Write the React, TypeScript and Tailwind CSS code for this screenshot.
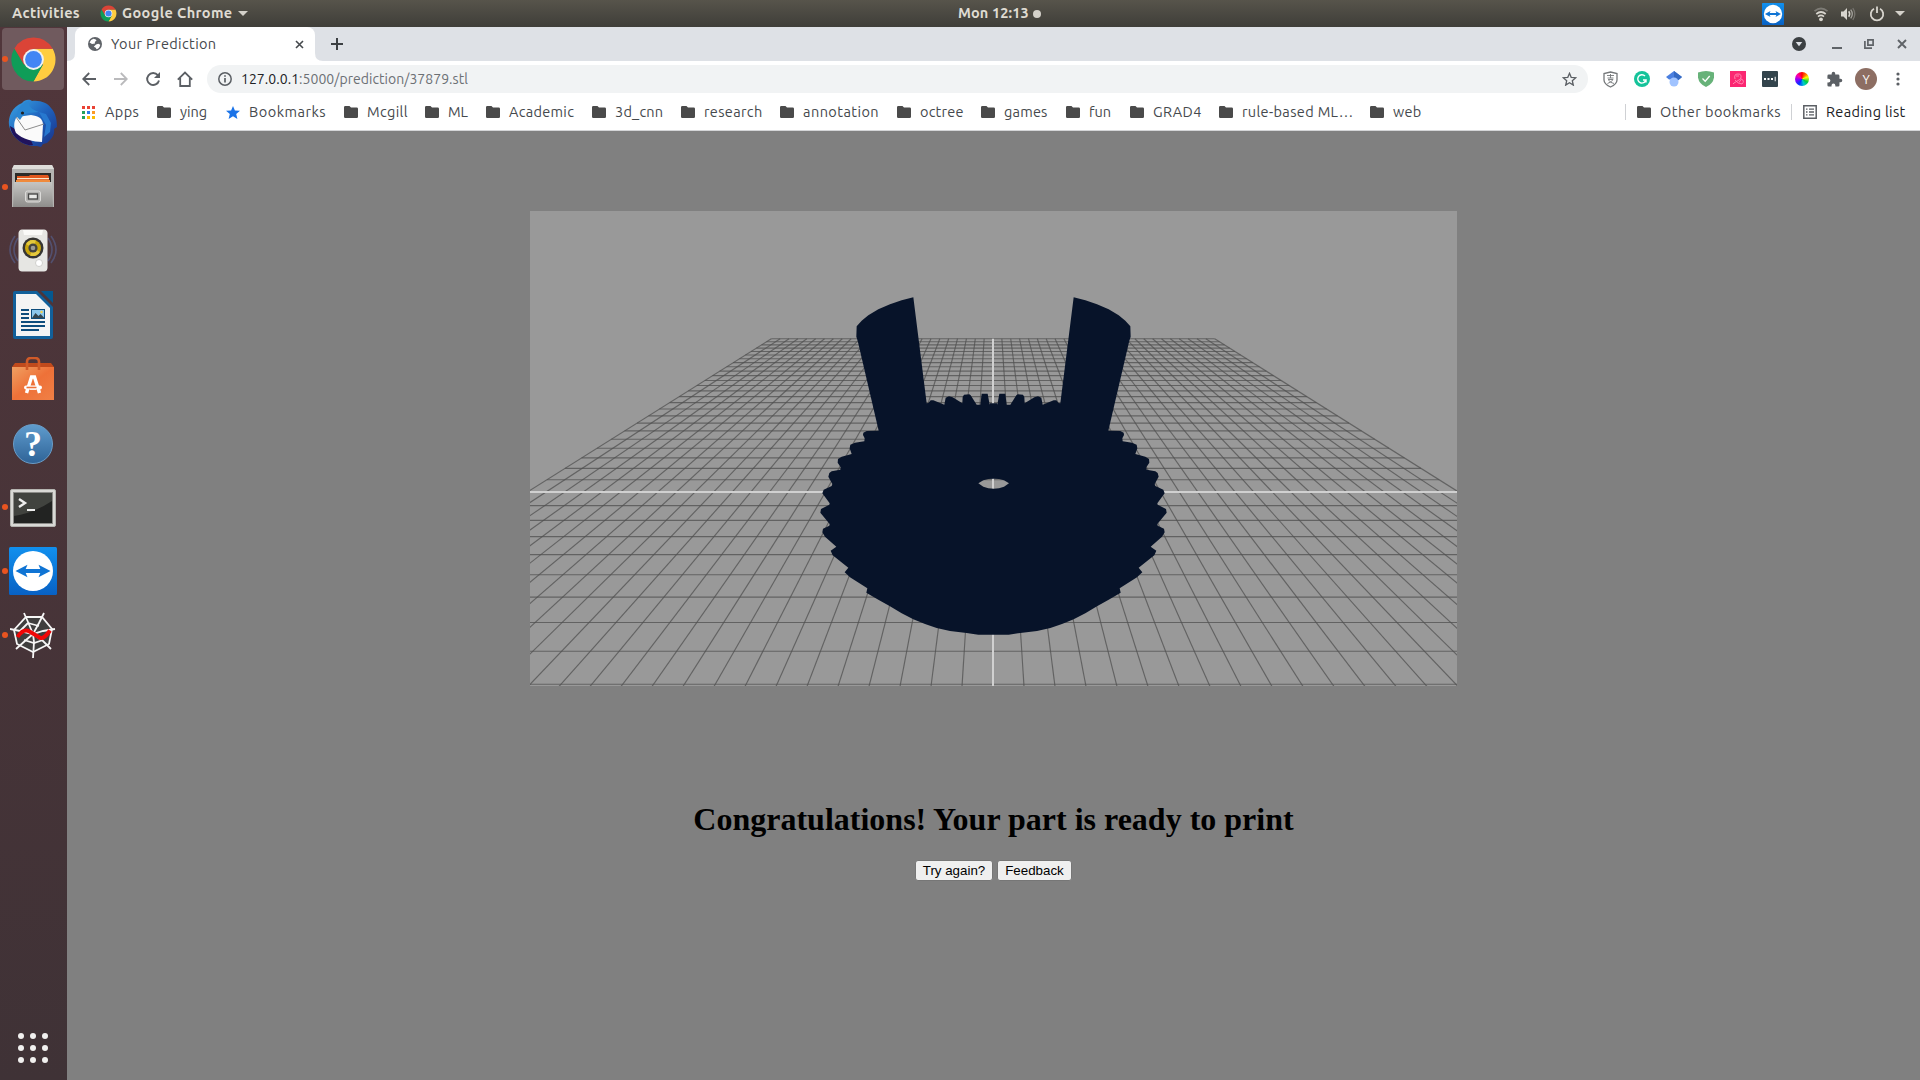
import React from "react";

const UI = "font-['Ubuntu','Noto_Sans',sans-serif]";

/* ---------- 3D viewer ---------- */

const CX = 463.5;
const DEPTH = 22.71;
const HORIZON = -11.6;
const ROWS = 292.7;
const HALF = 25;

const rowY = (k: number) => HORIZON + (ROWS * DEPTH) / (DEPTH - k);
const colX = (i: number, k: number) => CX - 0.5 + (i * 18.63 * DEPTH) / (DEPTH - k);

// Left half of the model outline, in thirds of a pixel, measured from (270, 69) of the canvas.
const OUTLINE: [number, number][] = [
  [580.5, 370], [570, 370], [569, 374], [563, 341], [545, 341], [541, 374], [530, 374], [512, 346], [508, 343],
  [492, 344], [488, 351], [487, 370], [458, 352], [447, 349], [437, 353], [433, 374], [400, 361], [392, 361],
  [385, 369], [380, 370], [340, 52], [305, 61], [270, 73], [235, 88], [205, 106], [185, 122], [170, 139],
  [169, 170], [173, 182], [236, 452], [200, 453], [190, 458], [189, 465], [194, 475], [193, 484], [165, 488],
  [151, 494], [149, 505], [155, 522], [125, 530], [114, 537], [113, 548], [122, 562], [121, 569], [95, 574],
  [88, 579], [85, 590], [97, 612], [95, 618], [71, 629], [67, 640], [89, 670], [88, 674], [63, 687], [61, 698],
  [89, 732], [88, 737], [69, 746], [67, 757], [75, 770], [109, 800], [92, 812], [98, 826], [145, 863],
  [134, 877], [150, 892], [202, 925], [199, 938], [235, 959], [270, 979], [305, 1000], [340, 1018], [375, 1032],
  [410, 1044], [450, 1053], [500, 1059], [535, 1064], [580.5, 1064],
];
const MIRRORED = [...OUTLINE, ...[...OUTLINE].reverse().map(([x, y]): [number, number] => [1161 - x, y])];
const toPath = (pts: [number, number][]) =>
  "M" + pts.map(([x, y]) => `${(270 + x / 3).toFixed(2)} ${(69 + y / 3).toFixed(2)}`).join("L") + "Z";
const HOLE: [number, number][] = [
  [535, 610], [550, 601], [565, 597], [581, 596], [597, 597], [612, 601], [627, 610], [612, 620], [597, 625],
  [581, 626], [565, 625], [550, 620],
];

function Viewer() {
  const cols = Array.from({ length: 2 * HALF + 1 }, (_, i) => i - HALF);
  const rows = Array.from({ length: 35 }, (_, i) => i - HALF);
  return (
    <svg width="927" height="475" viewBox="0 0 927 475" className="block bg-[#999999]">
      <g stroke="#505050" strokeWidth="1.150" strokeOpacity="0.750">
        {cols.filter((i) => i !== 0).map((i) => (
          <line key={i} x1={colX(i, -HALF)} y1={rowY(-HALF)} x2={colX(i, 11)} y2={rowY(11)} />
        ))}
        {rows.filter((k) => k !== 0).map((k) => (
          <line key={k} x1={colX(-HALF, k)} y1={rowY(k)} x2={colX(HALF, k)} y2={rowY(k)} />
        ))}
      </g>
      <g stroke="#d0d0d0" strokeWidth="2">
        <line x1="463" y1={rowY(-HALF)} x2="463" y2="475" />
        <line x1="0" y1="281" x2="927" y2="281" />
      </g>
      <path d={toPath(MIRRORED) + toPath(HOLE)} fill="#071329" fillRule="evenodd" />
    </svg>
  );
}

/* ---------- shared icons ---------- */

function ChromeLogo({ size }: { size: number }) {
  return (
    <svg width={size} height={size} viewBox="0 0 48 48">
      <path d="M24 13h19.6A22.5 22.5 0 0 1 24 46.5L33.5 29Z" fill="#ffcd40" />
      <path d="M4.5 12.7A22.5 22.5 0 0 0 24 46.5L33.5 29.5 24 24 14.5 29Z" fill="#0f9d58" />
      <path d="M4.5 12.7 14.5 29.5 24 13h19.6A22.5 22.5 0 0 0 4.5 12.7Z" fill="#db4437" />
      <circle cx="24" cy="24" r="10.600" fill="#f1f1f1" />
      <circle cx="24" cy="24" r="8.600" fill="#4285f4" />
    </svg>
  );
}

function TeamViewer({ size }: { size: number }) {
  return (
    <svg width={size} height={size} viewBox="0 0 48 48">
      <defs>
        <linearGradient id="tv" x1="0" y1="0" x2="0" y2="1">
          <stop offset="0" stopColor="#1190ee" />
          <stop offset="1" stopColor="#0861c4" />
        </linearGradient>
      </defs>
      <rect width="48" height="48" rx="1.500" fill="url(#tv)" />
      <circle cx="24" cy="24" r="20" fill="#fff" />
      <path d="m6.500 24 12-6.300-1.800 4.300h14.600l-1.800-4.300 12 6.300-12 6.300 1.800-4.300H16.700l1.800 4.300Z" fill="#0f74d4" />
    </svg>
  );
}

function Folder() {
  return (
    <svg width="14" height="12" viewBox="0 0 14 12" className="shrink-0">
      <path d="M1.300 0h4.200L7 1.500h5.700A1.300 1.300 0 0 1 14 2.800v7.900a1.300 1.300 0 0 1-1.300 1.300H1.300A1.300 1.300 0 0 1 0 10.700V1.300A1.300 1.300 0 0 1 1.300 0Z" fill="#4a4a4a" />
    </svg>
  );
}

/* ---------- top bar ---------- */

function TopBar() {
  return (
    <header className={`${UI} flex h-[27px] shrink-0 items-center bg-linear-to-b from-[#57544b] to-[#3f3e39] text-[14.500px] font-bold leading-none text-[#dfdbd2]`}>
      <div className="flex w-[958px] items-center pl-3">
        <span className="w-[88px] tracking-[0.350px]">Activities</span>
        <ChromeLogo size={17} />
        <span className="ml-[5px] w-[116px] tracking-[0.400px] whitespace-nowrap">Google Chrome</span>
        <svg width="10" height="5" viewBox="0 0 10 5"><path d="M0 0h10L5 5Z" fill="#d4d1ca" /></svg>
      </div>
      <div className="flex items-center">
        <span className="w-[75px] tracking-[0.100px] whitespace-nowrap">Mon 12:13</span>
        <span className="size-2 rounded-full bg-[#d4d1ca]" />
      </div>
      <div className="ml-auto flex items-center pr-[15px]">
        <TeamViewer size={22} />
        <svg className="ml-[29px]" width="16" height="16" viewBox="0 0 16 16" fill="none" strokeWidth="1.700">
          <path d="M1.500 5.200Q8-.200 14.500 5.200" stroke="#7d7b75" />
          <path d="M3.300 8Q8 4 12.700 8" stroke="#d8d5ce" />
          <path d="M5 10.600Q8 8.300 11 10.600" stroke="#d8d5ce" />
          <circle cx="8" cy="13.300" r="1.900" fill="#d8d5ce" />
        </svg>
        <svg className="ml-[11px]" width="16" height="16" viewBox="0 0 16 16" fill="none">
          <path d="M1 5.500h2.500L7 2v12l-3.500-3.500H1Z" fill="#d8d5ce" />
          <path d="M8.700 5.200q2 2.800 0 5.600" stroke="#d8d5ce" strokeWidth="1.500" />
          <path d="M10.700 3.600q3.200 4.400 0 8.800" stroke="#a5a39d" strokeWidth="1.300" />
          <path d="M12.800 2.200q4 5.800 0 11.600" stroke="#76746e" strokeWidth="1.300" />
        </svg>
        <svg className="ml-[13px]" width="16" height="16" viewBox="0 0 16 16" fill="none" stroke="#d8d5ce" strokeWidth="1.800">
          <path d="M5 2.700a6.200 6.200 0 1 0 6 0M8 .500v6.500" />
        </svg>
        <svg className="ml-[10px]" width="10" height="5" viewBox="0 0 10 5"><path d="M0 0h10L5 5Z" fill="#d4d1ca" /></svg>
      </div>
    </header>
  );
}

/* ---------- dock ---------- */

const Thunderbird = () => (
  <svg width="50" height="50" viewBox="0 0 50 50" className="mt-[2px]">
    <defs>
      <linearGradient id="tb" x1="0" y1="0" x2="1" y2="1">
        <stop offset="0" stopColor="#3aa5e4" />
        <stop offset="0.500" stopColor="#1f62bd" />
        <stop offset="1" stopColor="#182e83" />
      </linearGradient>
    </defs>
    <path d="M14 4c3-4 8-4 10-2 8-1 16 2 19 7 5 5 6 13 6 19l-3 2c1 5-2 9-4 11l-3 3-4 1-2 3-4-1c-14 1-26-9-28-21C0 18 4 8 14 4Z" fill="url(#tb)" />
    <path d="M2 27c1 8 7 15 15 18 5 2 8 1 8 1l-3-7Z" fill="#20135c" />
    <path d="m9 18 14-2c7 1 12 3 12 10l-1 17c-8 0-20-3-26-9-3-6-2-13 1-16Z" fill="#fafafa" />
    <path d="m8 18 9 13 19-6" fill="none" stroke="#8c8c8c" strokeWidth="1" />
    <path d="M9 18C9 9 15 3 21 2c-1 6 4 9 10 11-8 1-14 0-17 5l-2 3Z" fill="#2a86d2" />
    <path d="m31 13 7 13-2 12 6-5 1-9-5-9Z" fill="#2778cf" />
    <circle cx="14.500" cy="14" r="1.600" fill="#222" />
  </svg>
);

const Files = () => (
  <svg width="44" height="46" viewBox="0 0 44 46">
    <defs>
      <linearGradient id="fl" x1="0" y1="0" x2="0" y2="1">
        <stop offset="0" stopColor="#c6c5c3" />
        <stop offset="1" stopColor="#8e8d8b" />
      </linearGradient>
    </defs>
    <path d="M3 1h38l2 4v38H1V5Z" fill="#b5b4b2" />
    <path d="M3 1h38l2 4H1Z" fill="#deddda" />
    <rect x="4" y="9" width="36" height="11" fill="#2d2a28" />
    <path d="M6 12h12l1-1h18l1 2v6H6Z" fill="#e2571e" />
    <rect x="6" y="14" width="32" height="1.200" fill="#fbe7c8" />
    <rect x="5" y="16" width="34" height="3" fill="#f08a3c" />
    <path d="M3 18h38l1 25H2Z" fill="url(#fl)" />
    <rect x="14.500" y="27" width="15" height="11" rx="2" fill="#b5b4b2" stroke="#dcdbd9" />
    <rect x="17.500" y="30" width="9" height="5" fill="#e9e9e7" stroke="#4a4a4a" strokeWidth="1.400" />
  </svg>
);

const Rhythmbox = () => (
  <svg width="48" height="48" viewBox="0 0 48 48" className="-mt-[2px]">
    <g fill="none" stroke="#566292" strokeWidth="1.600" opacity="0.600">
      <path d="M6 10Q-4 24 6 37M9 12Q1 24 9 35M42 10Q52 24 42 37M39 12Q47 24 39 35" />
    </g>
    <path d="M13 3.500h22q3 0 3.500 3.500v35q-.500 3.500-3.500 3.500H13q-3 0-3.500-3.500V7q.500-3.500 3.500-3.500Z" fill="#e6e6e3" />
    <path d="M14 4h20l-1 5H15Z" fill="#fafaf8" />
    <circle cx="24" cy="22" r="10.500" fill="#363533" />
    <circle cx="24" cy="22" r="8" fill="#c8a50c" />
    <path d="M24 22 17 18a8 8 0 0 1 10-3.500ZM24 22l7 4a8 8 0 0 1-10 3.500Z" fill="#e4c83c" />
    <circle cx="24" cy="22" r="4.600" fill="#43423d" />
    <circle cx="24" cy="22" r="2.300" fill="#9b9a93" />
    <circle cx="30" cy="37" r="3.500" fill="#fff" stroke="#c5c5c2" strokeWidth="0.800" />
  </svg>
);

const Writer = () => (
  <svg width="40" height="48" viewBox="0 0 40 48">
    <path d="M2 0h22l16 16v30a2 2 0 0 1-2 2H2a2 2 0 0 1-2-2V2a2 2 0 0 1 2-2Z" fill="#12609a" />
    <path d="M28 0h12v12Z" fill="#05588f" />
    <path d="M3 3h20l14 14v28H3Z" fill="#f4f4f4" />
    <path d="M8 19h8M8 23h8M8 27h8M8 31h24M8 35h24M8 39h18" stroke="#0d4c7c" strokeWidth="2" />
    <rect x="18.500" y="18.500" width="13" height="9" fill="#8cc7ec" stroke="#0d4c7c" />
    <path d="m19 27 3.500-5 3 3 2-2 4 4Z" fill="#34454e" />
    <circle cx="28.500" cy="21" r="1.200" fill="#f7d248" />
  </svg>
);

const Software = () => (
  <svg width="42" height="44" viewBox="0 0 42 44">
    <defs>
      <linearGradient id="sw" x1="0" y1="0" x2="1" y2="1">
        <stop offset="0" stopColor="#f0a062" />
        <stop offset="0.500" stopColor="#ee7138" />
        <stop offset="1" stopColor="#f08046" />
      </linearGradient>
    </defs>
    <path d="m0 10 3-4h36l3 4Z" fill="#c04a1c" />
    <path d="M0 10h42v33H0Z" fill="url(#sw)" />
    <path d="M15 13V5q0-4 4-4h4q4 0 4 4v8" fill="none" stroke="#d05a28" strokeWidth="2.600" />
    <path d="m14.500 36 5-16h3l5 16M18 31h6" fill="none" stroke="#fff" strokeWidth="3.400" />
    <rect x="12" y="28.500" width="18" height="4" rx="2" fill="#fff" />
    <path d="M14.500 30.500h10" stroke="#ee7138" strokeWidth="1.600" />
  </svg>
);

const Help = () => (
  <span className="mt-[2px] flex size-10 items-center justify-center rounded-full border border-[#6a9dc8] bg-linear-to-b from-[#5f9ccd] to-[#2f6498]">
    <span className="font-['Liberation_Serif',serif] text-[36px] font-bold leading-none text-white">?</span>
  </span>
);

const Terminal = () => (
  <svg width="46" height="38" viewBox="0 0 46 38" className="mt-[2px]">
    <rect x="0.500" y="0.500" width="45" height="37" rx="1.500" fill="#d9d9d6" stroke="#b4b4b0" />
    <rect x="3.500" y="3.500" width="39" height="31" fill="#222322" stroke="#8b8b88" />
    <path d="M4 4h38v8Q24 24 4 27Z" fill="#41433f" />
    <path d="m9 10 6 4-6 4" fill="none" stroke="#eee" strokeWidth="2.400" />
    <path d="M17 21h8" stroke="#eee" strokeWidth="2" />
  </svg>
);

const Spyder = () => (
  <svg width="46" height="46" viewBox="0 0 46 46">
    <path d="m16 5 16 0 10 12-3 15-16 8L7 32 4 18Z" fill="#3f3e3e" />
    <g fill="none" stroke="#f6f6f6" strokeWidth="1.800">
      <path d="m16 5 16 0 10 12-3 15-16 8L7 32 4 18Z" />
      <path d="m14 1 4 9 5 12M34 1l-5 10-6 11M0 17l10 2 13 3 10-3 12-2M23 22l1 8-1 16M6 37l10-9 7-6M41 37l-8-8-10-7" />
      <path d="M18 11 29 14M10 19l8-8M14 28l10 3 9-3" />
    </g>
    <path d="M7.500 25q6-9 12-5.500t10 6T40 18.500" fill="none" stroke="#f00606" strokeWidth="4" />
  </svg>
);

const DOCK: { icon: React.ReactNode; running?: boolean; active?: boolean }[] = [
  { icon: <ChromeLogo size={47} />, running: true, active: true },
  { icon: <Thunderbird /> },
  { icon: <Files />, running: true },
  { icon: <Rhythmbox /> },
  { icon: <Writer /> },
  { icon: <Software /> },
  { icon: <Help /> },
  { icon: <Terminal />, running: true },
  { icon: <TeamViewer size={48} />, running: true },
  { icon: <Spyder />, running: true },
];

function Dock() {
  return (
    <nav className="flex w-[67px] shrink-0 flex-col bg-linear-to-b from-[#51363b] to-[#3f3236]">
      {DOCK.map((d, i) => (
        <div key={i} className="flex h-16 items-center pl-[2px]">
          <div className={`grid h-[62px] w-[62px] grid-cols-[6px_1fr_6px] items-center rounded-[4px] ${d.active ? "bg-[#705a5e]" : ""}`}>
            <span className={`size-[6px] rounded-full ${d.running ? "bg-[#e95420]" : ""}`} />
            <span className="flex justify-center">{d.icon}</span>
          </div>
        </div>
      ))}
      <div className="mt-auto mb-[17px] ml-[18px] grid w-[30px] grid-cols-3 gap-[6px]">
        {Array.from({ length: 9 }, (_, i) => (
          <span key={i} className="size-[6px] rounded-full bg-[#f1f0ef]" />
        ))}
      </div>
    </nav>
  );
}

/* ---------- browser ---------- */

function TabStrip() {
  return (
    <div className="flex h-[34px] bg-[#dee1e6] text-[#45494d]">
      <svg width="8" height="34" viewBox="0 0 8 34"><path d="M8 26v8H0q8 0 8-8Z" fill="#fff" /></svg>
      <div className="flex w-60 items-center rounded-t-lg bg-white pl-[13px]">
        <svg width="14" height="14" viewBox="0 0 14 14">
          <circle cx="7" cy="7" r="7" fill="#5f6368" />
          <path d="M5.500 1.800q3 .400 3 1.700L6.800 5 7 6.600 4 7 1.600 5.600Q2.500 2.500 5.500 1.800ZM8 7.500l2.300-.800 2 1q-.600 3.500-3.800 4.600l-.700-1.600-2-1Z" fill="#fff" />
        </svg>
        <span className="ml-[9px] w-[184px] text-[14.500px] leading-none tracking-[0.350px]">Your Prediction</span>
        <svg width="9" height="9" viewBox="0 0 9 9" stroke="#45494d" strokeWidth="1.600"><path d="m1 1 7 7M8 1 1 8" /></svg>
      </div>
      <svg width="8" height="34" viewBox="0 0 8 34"><path d="M0 26v8h8q-8 0-8-8Z" fill="#fff" /></svg>
      <svg className="mt-[11px] ml-2" width="12" height="12" viewBox="0 0 12 12" stroke="#3c4043" strokeWidth="2"><path d="M6 0v12M0 6h12" /></svg>
      <div className="ml-auto flex items-center pr-[13px]">
        <svg width="14" height="14" viewBox="0 0 14 14"><circle cx="7" cy="7" r="7" fill="#3c4043" /><path d="M3.700 5h6.600L7 9.300Z" fill="#dee1e6" /></svg>
        <svg className="ml-[26px]" width="10" height="10" viewBox="0 0 10 10"><path d="M0 8h10v2H0Z" fill="#5f6368" /></svg>
        <svg className="ml-[22px]" width="10" height="10" viewBox="0 0 10 10" fill="none" stroke="#5f6368" strokeWidth="1.700"><path d="M3.900.900h5.200v5.200H3.900ZM.900 2v7.100H8" /></svg>
        <svg className="ml-[23px]" width="10" height="10" viewBox="0 0 10 10" stroke="#5f6368" strokeWidth="1.900"><path d="m1 1 8 8M9 1 1 9" /></svg>
      </div>
    </div>
  );
}

const Cell = ({ children }: { children: React.ReactNode }) => (
  <span className="flex w-8 shrink-0 items-center justify-center">{children}</span>
);

function Toolbar() {
  return (
    <div className="flex h-9 items-center bg-white pl-[6px]">
      <Cell><svg width="14" height="14" viewBox="0 0 14 14" fill="none" stroke="#5b5f64" strokeWidth="1.800"><path d="M14 7H1.500M7.200 1 1.200 7l6 6" /></svg></Cell>
      <Cell><svg width="14" height="14" viewBox="0 0 14 14" fill="none" stroke="#bababc" strokeWidth="1.800"><path d="M0 7h12.500M6.800 1l6 6-6 6" /></svg></Cell>
      <Cell>
        <svg width="16" height="16" viewBox="0 0 16 16" fill="none" stroke="#5b5f64" strokeWidth="1.900">
          <path d="M12.800 4.200A6 6 0 1 0 14 9.500" /><path d="M15 1v6H9Z" fill="#5b5f64" stroke="none" />
        </svg>
      </Cell>
      <Cell><svg width="16" height="16" viewBox="0 0 16 16" fill="none" stroke="#5b5f64" strokeWidth="1.800"><path d="M.800 8.700 8 1.500l7.200 7.200M3.200 7v8h9.600V7" /></svg></Cell>
      <div className="ml-[6px] flex h-7 w-[1381px] items-center rounded-full bg-[#f1f3f4] pl-[11px]">
        <svg width="14" height="14" viewBox="0 0 14 14" fill="none" stroke="#5b5f64" strokeWidth="1.500"><circle cx="7" cy="7" r="6.200" /><path d="M7 6v4.500M7 3.300v1.500" strokeWidth="1.700" /></svg>
        <span className="ml-[9px] text-[14px] leading-none tracking-[0.040px] text-[#6c7074]"><span className="text-[#202124]">127.0.0.1</span>:5000/prediction/37879.stl</span>
        <svg className="mr-[11px] ml-auto" width="15" height="14" viewBox="0 0 15 14" fill="none" stroke="#5b5f64" strokeWidth="1.300"><path d="m7.500 1.300 1.700 4 4.500.400-3.400 3 1 4.400-3.800-2.400-3.800 2.400 1-4.400-3.400-3 4.500-.400Z" /></svg>
      </div>
      <span className="w-[6px]" />
      <Cell>
        <svg width="15" height="17" viewBox="0 0 15 17" fill="none" stroke="#75787a">
          <path d="M7.500 1 14 2.500V9q0 4-6.500 7Q1 13 1 9V2.500Z" strokeWidth="1.300" />
          <path d="M4 4.500h7M7.500 3v4M4.500 7h6M5 8.500h5Q9 11 4.500 12.500M5.500 9q2 3 5.500 3.500" strokeWidth="0.900" />
        </svg>
      </Cell>
      <Cell>
        <svg width="16" height="16" viewBox="0 0 16 16"><circle cx="8" cy="8" r="8" fill="#15c39a" /><path d="M11 5A4.200 4.200 0 1 0 12 9H9M12 9v2.500" fill="none" stroke="#fff" strokeWidth="1.400" /></svg>
      </Cell>
      <Cell>
        <svg width="16" height="16" viewBox="0 0 16 16"><path d="M8 0 0 6l3 2.500h10L16 6Z" fill="#4a7fe0" /><path d="m8 0 8 6-4 3.500-4-3Z" fill="#356ac3" /><circle cx="8" cy="11" r="4.500" fill="#a0c3ff" /></svg>
      </Cell>
      <Cell>
        <svg width="16" height="16" viewBox="0 0 16 16"><path d="M8 0q4 0 8 1.500v5Q15 13 8 16 1 13 0 6.500v-5Q4 0 8 0Z" fill="#67b279" /><path d="m4.500 7.500 2.700 2.700L11.700 5" fill="none" stroke="#fff" strokeWidth="1.300" /></svg>
      </Cell>
      <Cell>
        <svg width="16" height="16" viewBox="0 0 16 16" fill="none" stroke="#ff8fb4" strokeWidth="0.900"><rect width="16" height="16" fill="#fb2772" stroke="none" /><path d="M5 8q-1.500-5 3-5t2.500 5L4 12l-1 1M5 9q3 4 7 4 3-3-.500-5L9 11.500M6 5h3" /></svg>
      </Cell>
      <Cell>
        <svg width="16" height="16" viewBox="0 0 16 16"><rect width="16" height="16" rx="1" fill="#33444c" /><path d="M2 7h2v2H2ZM5.500 7h2v2h-2ZM9 7h2v2H9ZM12.700 5.700h1v4.600h-1Z" fill="#fff" /></svg>
      </Cell>
      <Cell>
        <span className="size-[14px] rounded-full bg-[conic-gradient(#f00,#f80_45deg,#ff0_70deg,#0c4_120deg,#0cc_160deg,#03f_210deg,#80f_260deg,#f0a_310deg,#f00)]" />
      </Cell>
      <Cell>
        <svg width="17" height="17" viewBox="0 0 24 24" fill="#5b5f64"><path d="M20.500 11H19V7a2 2 0 0 0-2-2h-4V3.500a2.500 2.500 0 0 0-5 0V5H4a2 2 0 0 0-2 2v3.800h1.500a2.700 2.700 0 0 1 0 5.400H2V20a2 2 0 0 0 2 2h3.800v-1.500a2.700 2.700 0 0 1 5.400 0V22H17a2 2 0 0 0 2-2v-4h1.500a2.500 2.500 0 0 0 0-5Z" /></svg>
      </Cell>
      <Cell>
        <span className="flex size-[22px] items-center justify-center rounded-full bg-[#8d6e63] text-[12.500px] leading-none text-white">Y</span>
      </Cell>
      <Cell>
        <svg width="4" height="14" viewBox="0 0 4 14" fill="#5b5f64"><circle cx="2" cy="2" r="1.600" /><circle cx="2" cy="7" r="1.600" /><circle cx="2" cy="12" r="1.600" /></svg>
      </Cell>
    </div>
  );
}

const APP_DOTS = [
  "bg-[#ea4335]", "bg-[#ea4335]", "bg-[#ea4335]",
  "bg-[#22a35a]", "bg-[#2a7de9]", "bg-[#fb9a25]",
  "bg-[#22a35a]", "bg-[#fbbc05]", "bg-[#fbbc05]",
];

const BOOKMARKS: [string, string][] = [
  ["ying", "w-[69px]"],
  ["Bookmarks", "w-[118px] tracking-[0.500px]"],
  ["Mcgill", "w-[81px] tracking-[0.350px]"],
  ["ML", "w-[61px]"],
  ["Academic", "w-[106px] tracking-[0.300px]"],
  ["3d_cnn", "w-[89px] tracking-[0.200px]"],
  ["research", "w-[99px] tracking-[0.350px]"],
  ["annotation", "w-[117px] tracking-[0.450px]"],
  ["octree", "w-[84px] tracking-[0.200px]"],
  ["games", "w-[85px] tracking-[0.200px]"],
  ["fun", "w-[64px]"],
  ["GRAD4", "w-[89px] tracking-[0.350px]"],
  ["rule-based ML…", "w-[151px] tracking-[0.350px]"],
  ["web", "w-[60px] tracking-[0.300px]"],
];

function BookmarkBar() {
  return (
    <div className="flex h-[34px] items-center border-b border-[#d4d5d7] bg-white pb-[3px] pl-[15px] text-[14.500px] leading-none text-[#45494d] whitespace-nowrap">
      <div className="flex w-[75px] items-center gap-[10px] tracking-[0.400px]">
        <span className="grid w-[13px] grid-cols-3 gap-[2px]">
          {APP_DOTS.map((c, i) => <span key={i} className={`size-[3px] ${c}`} />)}
        </span>
        Apps
      </div>
      {BOOKMARKS.map(([name, w]) => (
        <div key={name} className={`${w} flex shrink-0 items-center gap-[9px]`}>
          {name === "Bookmarks" ? (
            <svg width="14" height="13" viewBox="0 0 14 13" className="shrink-0"><path d="m7 0 1.900 4.400 5.100.400-3.800 3.200 1.200 5L7 10.300 2.600 13l1.200-5L0 4.800l5.100-.400Z" fill="#1a73e8" /></svg>
          ) : <Folder />}
          {name}
        </div>
      ))}
      <div className="ml-auto flex items-center pr-[14px]">
        <span className="mr-[11px] h-4 w-px bg-[#cfd1d4]" />
        <Folder />
        <span className="ml-[9px] w-[131px] tracking-[0.480px]">Other bookmarks</span>
        <span className="mr-[11px] h-4 w-px bg-[#cfd1d4]" />
        <svg width="14" height="14" viewBox="0 0 14 14" fill="none" stroke="#5b5f64" strokeWidth="1.500"><path d="M.800.800h12.400v12.400H.800Z" /><path d="M3 4.200h1.500M6 4.200h5M3 7h1.500M6 7h5M3 9.800h1.500M6 9.800h5" strokeWidth="1.300" /></svg>
        <span className="ml-[9px] w-20 tracking-[0.320px] text-[#202124]">Reading list</span>
      </div>
    </div>
  );
}

function Page() {
  return (
    <main className="flex flex-1 flex-col items-center bg-[#808080] pt-20 text-black">
      <Viewer />
      <h1 className="mt-[115px] font-['Liberation_Serif',serif] text-[32px] font-bold leading-[37px]">
        Congratulations! Your part is ready to print
      </h1>
      <div className="mt-[22px] flex gap-[4px] font-['Liberation_Sans',Arial,sans-serif] text-[13.333px] leading-none">
        <button className="h-[21px] w-[78px] rounded-[3px] border border-[#767676] bg-[#efefef]">Try again?</button>
        <button className="h-[21px] w-[75px] rounded-[3px] border border-[#767676] bg-[#efefef]">Feedback</button>
      </div>
    </main>
  );
}

export default function App() {
  return (
    <div className="flex h-[1080px] w-[1920px] flex-col overflow-hidden">
      <TopBar />
      <div className="flex min-h-0 flex-1">
        <Dock />
        <section className={`${UI} flex flex-1 flex-col`}>
          <TabStrip />
          <Toolbar />
          <BookmarkBar />
          <Page />
        </section>
      </div>
    </div>
  );
}
